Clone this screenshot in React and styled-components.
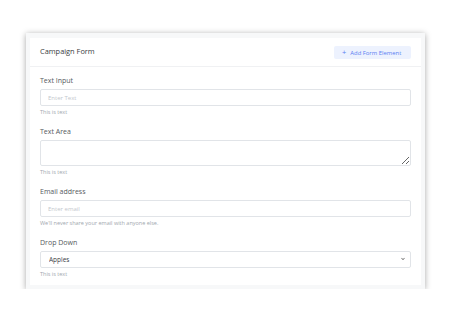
import React from "react";
import styled, { createGlobalStyle } from "styled-components";

const Global = createGlobalStyle`
  html, body {
    margin: 0;
    padding: 0;
    background: #ffffff;
    font-family: "Open Sans", "Liberation Sans", sans-serif;
  }
`;

const Page = styled.div`
  padding: 33px 30px 0 26px;
`;

const Frame = styled.div`
  width: 399px;
  box-sizing: border-box;
  padding: 5px 4px 4px 4px;
  background: #f7f8f9;
  box-shadow: 0 1px 6px rgba(0, 0, 0, 0.35);
`;

const Card = styled.div`
  background: #ffffff;
`;

const Header = styled.div`
  height: 29px;
  box-sizing: border-box;
  display: flex;
  align-items: center;
  justify-content: space-between;
  padding: 0 10px;
  border-bottom: 1px solid #f0f1f3;
`;

const Title = styled.h2`
  margin: 0;
  font-size: 7.4px;
  font-weight: 500;
  color: #3a3d42;
  margin-top: -3px;
`;

const AddButton = styled.button`
  display: flex;
  align-items: center;
  gap: 4px;
  height: 13px;
  width: 77px;
  padding: 0 0 0 8px;
  margin-top: 1px;
  border: none;
  border-radius: 2px;
  background: #edf2fe;
  color: #5b7ef2;
  font-family: inherit;
  font-size: 5.9px;
  font-weight: 500;
`;

const Plus = styled.span`
  font-size: 7.5px;
  margin-top: -1px;
`;

const Body = styled.div`
  padding: 9px 10px 8px 10px;
`;

const Group = styled.div`
  & + & {
    margin-top: 12px;
  }
`;

const Label = styled.label`
  display: block;
  font-size: 7px;
  line-height: 9px;
  color: #555a60;
  margin-bottom: 4px;
`;

const fieldBase = `
  display: block;
  width: 100%;
  box-sizing: border-box;
  border: 1px solid #e1e4e8;
  border-radius: 2px;
  background: #ffffff;
  font-family: "Open Sans", "Liberation Sans", sans-serif;
  font-size: 6px;
  color: #4a4e54;
  outline: none;
  margin: 0;
  &::placeholder {
    color: #c3c7cd;
  }
`;

const Input = styled.input`
  ${fieldBase}
  height: 17px;
  padding: 0 7px;
`;

const Area = styled.textarea`
  ${fieldBase}
  height: 26px;
  padding: 4px 7px;
  resize: vertical;
`;

const SelectWrap = styled.div`
  position: relative;
`;

const Select = styled.select`
  ${fieldBase}
  height: 17px;
  padding: 0 8px;
  appearance: none;
  font-size: 6.5px;
  color: #3c4046;
`;

const Chevron = styled.svg`
  position: absolute;
  right: 6px;
  top: 6px;
  width: 4px;
  height: 4px;
  pointer-events: none;
`;

const Help = styled.div`
  margin-top: 3px;
  font-size: 5.5px;
  line-height: 6px;
  color: #a2a7ae;
`;

const fields = [
  { label: "Text Input", kind: "input", placeholder: "Enter Text", help: "This is text" },
  { label: "Text Area", kind: "area", help: "This is text" },
  { label: "Email address", kind: "input", placeholder: "Enter email", help: "We'll never share your email with anyone else." },
  { label: "Drop Down", kind: "select", help: "This is text" },
];

function Field({ label, kind, placeholder, help }) {
  let control;
  if (kind === "area") control = <Area />;
  else if (kind === "select")
    control = (
      <SelectWrap>
        <Select defaultValue="Apples">
          <option>Apples</option>
          <option>Oranges</option>
        </Select>
        <Chevron viewBox="0 0 16 16">
          <path d="M3 5l5 6 5-6" fill="none" stroke="#444" strokeWidth="3" strokeLinecap="round" strokeLinejoin="round" />
        </Chevron>
      </SelectWrap>
    );
  else control = <Input placeholder={placeholder} />;
  return (
    <Group>
      <Label>{label}</Label>
      {control}
      <Help>{help}</Help>
    </Group>
  );
}

export default function App() {
  return (
    <>
      <Global />
      <Page>
        <Frame>
          <Card>
            <Header>
              <Title>Campaign Form</Title>
              <AddButton>
                <Plus>+</Plus>
                Add Form Element
              </AddButton>
            </Header>
            <Body>
              {fields.map((f) => (
                <Field key={f.label} {...f} />
              ))}
            </Body>
          </Card>
        </Frame>
      </Page>
    </>
  );
}
